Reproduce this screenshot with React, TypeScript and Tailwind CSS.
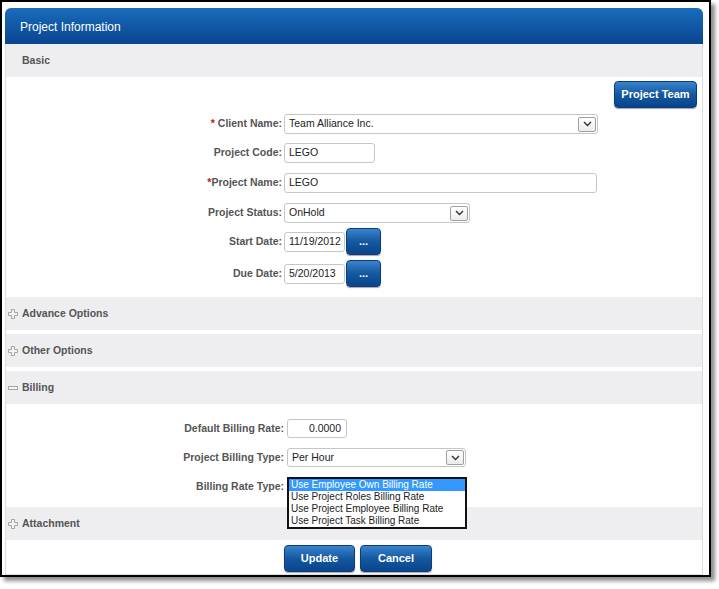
import React from "react"

const font = { fontFamily: '"Liberation Sans", Arial, sans-serif' }

const BlueButton = ({ children, className = "" }: { children: React.ReactNode; className?: string }) => (
  <button
    className={`rounded-[4px] border border-[#0a3d80] bg-gradient-to-b from-[#3a84cf] via-[#14589f] to-[#0a448c] text-white font-bold text-[11px] shadow-[0_1px_1px_rgba(0,0,0,0.35)] ${className}`}
  >
    {children}
  </button>
)

const Chevron = () => (
  <span className="flex items-center justify-center w-[18px] h-[15px] mr-[1px] border border-[#a0a0a0] rounded-[2px] bg-gradient-to-b from-white to-[#ececec]">
    <svg width="9" height="6" viewBox="0 0 9 6">
      <path d="M1 1 L4.5 4.5 L8 1" fill="none" stroke="#333" strokeWidth="1.4" />
    </svg>
  </span>
)

const Field = ({ text, width, height = 20, select, right }: { text: string; width: number; height?: number; select?: boolean; right?: boolean }) => (
  <div
    className={`flex items-center bg-white border border-[#c6c6c6] rounded-[3px] text-[10.5px] text-[#222] ${right ? "justify-end pr-[5px]" : "justify-between pl-[4px]"}`}
    style={{ width, height }}
  >
    <span>{text}</span>
    {select && <Chevron />}
  </div>
)

const Label = ({ children, w = 276 }: { children: React.ReactNode; w?: number }) => (
  <div className="text-right font-bold text-[10.5px] text-[#555] shrink-0" style={{ width: w }}>
    {children}
  </div>
)

const Star = () => <span className="text-[#cc1111]">*</span>

const PlusIcon = () => (
  <svg width="10" height="10" viewBox="0 0 10 10">
    <path d="M3.5 0.5 H6.5 V3.5 H9.5 V6.5 H6.5 V9.5 H3.5 V6.5 H0.5 V3.5 H3.5 Z" fill="#f4f4f4" stroke="#a5a5a5" strokeWidth="1" />
  </svg>
)

const MinusIcon = () => (
  <svg width="10" height="10" viewBox="0 0 10 10">
    <rect x="0.5" y="3.5" width="9" height="3" fill="#f4f4f4" stroke="#a5a5a5" strokeWidth="1" />
  </svg>
)

const Bar = ({ title, icon }: { title: string; icon?: "plus" | "minus" }) => (
  <div className="h-[33px] bg-[#eeeef0] flex items-center gap-[4px] pl-[2px] font-bold text-[10.5px] text-[#555]">
    {icon === "plus" && <PlusIcon />}
    {icon === "minus" && <MinusIcon />}
    <span>{title}</span>
  </div>
)

export default function App() {
  return (
    <div className="w-[719px] h-[589px] bg-white" style={font}>
      <div className="w-[711px] h-[577px] border-2 border-black shadow-[4px_4px_4px_rgba(0,0,0,0.45)] pt-[6px] pl-[3px] pr-[6px]">
        <div className="h-[567px] border border-[#dcdcdc] border-t-0 rounded-t-[6px]">
          <div className="h-[36px] -mx-[1px] rounded-t-[6px] bg-gradient-to-b from-[#1a6cbc] to-[#094590] flex items-center pl-[15px] pt-[1px] text-white text-[12px]">
            Project Information
          </div>
          <div className="h-[33px] bg-[#eeeef0] flex items-center pl-[16px] font-bold text-[10.5px] text-[#555]">Basic</div>

          <div className="flex justify-end pr-[5px] mt-[4px]">
            <BlueButton className="w-[83px] h-[27px]">Project Team</BlueButton>
          </div>

          <div className="flex items-center gap-[2px] mt-[6px]">
            <Label>
              <Star /> Client Name:
            </Label>
            <Field text="Team Alliance Inc." width={314} select />
          </div>
          <div className="flex items-center gap-[2px] mt-[9px]">
            <Label>Project Code:</Label>
            <Field text="LEGO" width={91} />
          </div>
          <div className="flex items-center gap-[2px] mt-[10px]">
            <Label>
              <Star />
              Project Name:
            </Label>
            <Field text="LEGO" width={313} />
          </div>
          <div className="flex items-center gap-[2px] mt-[10px]">
            <Label>Project Status:</Label>
            <Field text="OnHold" width={186} select />
          </div>
          <div className="flex items-center gap-[2px] mt-[5px] h-[27px]">
            <Label>Start Date:</Label>
            <Field text="11/19/2012" width={61} />
            <BlueButton className="w-[35px] h-[27px] -ml-[1px]">...</BlueButton>
          </div>
          <div className="flex items-center gap-[2px] mt-[5px] h-[27px]">
            <Label>Due Date:</Label>
            <Field text="5/20/2013" width={61} />
            <BlueButton className="w-[35px] h-[27px] -ml-[1px]">...</BlueButton>
          </div>

          <div className="mt-[10px] flex flex-col gap-[4px]">
            <Bar title="Advance Options" icon="plus" />
            <Bar title="Other Options" icon="plus" />
            <Bar title="Billing" icon="minus" />
          </div>

          <div className="flex items-center gap-[3px] mt-[15px]">
            <Label w={278}>Default Billing Rate:</Label>
            <Field text="0.0000" width={60} height={19} right />
          </div>
          <div className="flex items-center gap-[3px] mt-[10px]">
            <Label w={278}>Project Billing Type:</Label>
            <Field text="Per Hour" width={179} height={19} select />
          </div>
          <div className="flex items-center gap-[3px] mt-[10px] h-[19px]">
            <Label w={278}>Billing Rate Type:</Label>
            <div className="relative w-[180px] h-[19px]">
              <div className="absolute left-0 top-0 z-10 w-[180px] border-2 border-[#111] bg-white text-[10px] text-[#222] leading-[12px]">
                <div className="bg-[#3399ff] text-white pl-[2px]">Use Employee Own Billing Rate</div>
                <div className="pl-[2px]">Use Project Roles Billing Rate</div>
                <div className="pl-[2px]">Use Project Employee Billing Rate</div>
                <div className="pl-[2px]">Use Project Task Billing Rate</div>
              </div>
            </div>
          </div>

          <div className="mt-[11px]">
            <Bar title="Attachment" icon="plus" />
          </div>

          <div className="flex gap-[5px] mt-[5px] pl-[278px]">
            <BlueButton className="w-[71px] h-[27px]">Update</BlueButton>
            <BlueButton className="w-[72px] h-[27px]">Cancel</BlueButton>
          </div>
        </div>
      </div>
    </div>
  )
}
